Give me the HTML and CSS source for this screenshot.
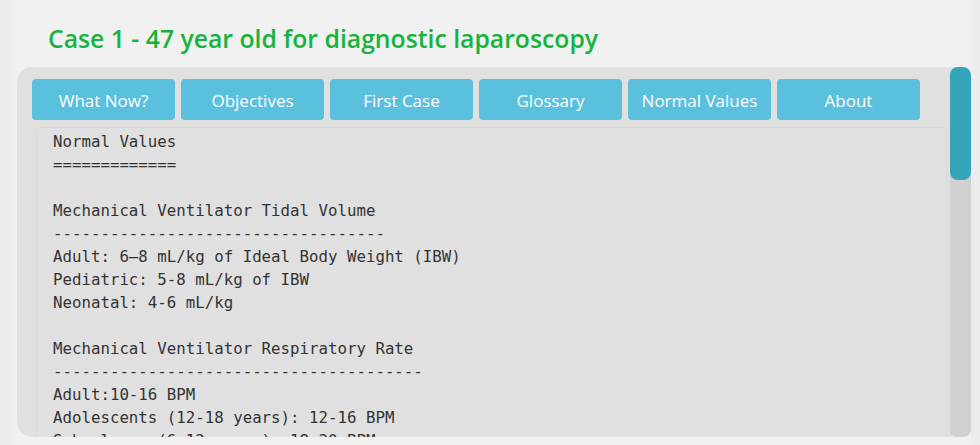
FILE: index.html
```html
<!DOCTYPE html>
<html lang="en">
<head>
<meta charset="utf-8">
<title>Case 1 - Normal Values</title>
<link rel="stylesheet" href="styles.css">
</head>
<body>
<div class="page">
  <h1 class="case-title">Case 1 - 47 year old for diagnostic laparoscopy</h1>
  <div class="panel">
    <div class="panel-body">
      <nav class="tabs">
        <button class="tab">What Now?</button>
        <button class="tab">Objectives</button>
        <button class="tab">First Case</button>
        <button class="tab">Glossary</button>
        <button class="tab">Normal Values</button>
        <button class="tab">About</button>
      </nav>
<pre class="notes">Normal Values
=============

Mechanical Ventilator Tidal Volume
-----------------------------------
Adult: 6–8 mL/kg of Ideal Body Weight (IBW)
Pediatric: 5-8 mL/kg of IBW
Neonatal: 4-6 mL/kg

Mechanical Ventilator Respiratory Rate
---------------------------------------
Adult:10-16 BPM
Adolescents (12-18 years): 12-16 BPM
School-age (6-12 years): 18-30 BPM
Preschool (3-6 years): 22-34 BPM
Toddler (1-3 years): 24-40 BPM
Infant (1-12 months): 30-60 BPM
Neonate: 40-60 BPM
</pre>
    </div>
    <div class="scrollbar"><div class="scrollbar-thumb"></div></div>
  </div>
</div>
</body>
</html>
```
FILE: styles.css
```css
html, body {
  margin: 0;
  padding: 0;
  background: #ececec;
  height: 100%;
  overflow: hidden;
}

.page {
  margin: 0 9px 0 13px;
  background: #f1f1f1;
  height: 100%;
  padding: 21px 0 0 4px;
  box-sizing: border-box;
}

.case-title {
  margin: 0 0 11px 31px;
  font-family: "Open Sans", sans-serif;
  font-weight: 600;
  font-size: 24.75px;
  line-height: 35px;
  color: #16b43c;
}

/* grey scroll panel: content column + custom scrollbar column */
.panel {
  display: flex;
  height: 370px;
  width: 954px;
  background: #e0e0e0;
  border-radius: 15px 8px 8px 15px;
  overflow: hidden;
}

.panel-body {
  flex: 1;
  min-width: 0;
  padding: 12px 0 0 15px;
  overflow: hidden;
}

.scrollbar {
  width: 21px;
  flex: none;
  background: #d0d0d0;
  border-radius: 8px 8px 7px 7px;
}

.scrollbar-thumb {
  height: 113px;
  background: #34a5b9;
  border-radius: 8px;
}

.tabs {
  display: flex;
  gap: 6px;
}

.tab {
  width: 143px;
  height: 41px;
  border: none;
  border-radius: 4px;
  background: #5bc0de;
  color: #fff;
  font-family: "Open Sans", sans-serif;
  font-size: 17px;
  padding: 1px 0 0;
}

.notes {
  margin: 7px 3px 0 4px;
  padding: 2px 16px 10px 16px;
  background: #e0e0e0;
  border: 1px solid #d9d9d9;
  border-radius: 4px;
  font-family: "DejaVu Sans Mono", monospace;
  font-size: 15.75px;
  line-height: 23px;
  color: #333;
}
```
